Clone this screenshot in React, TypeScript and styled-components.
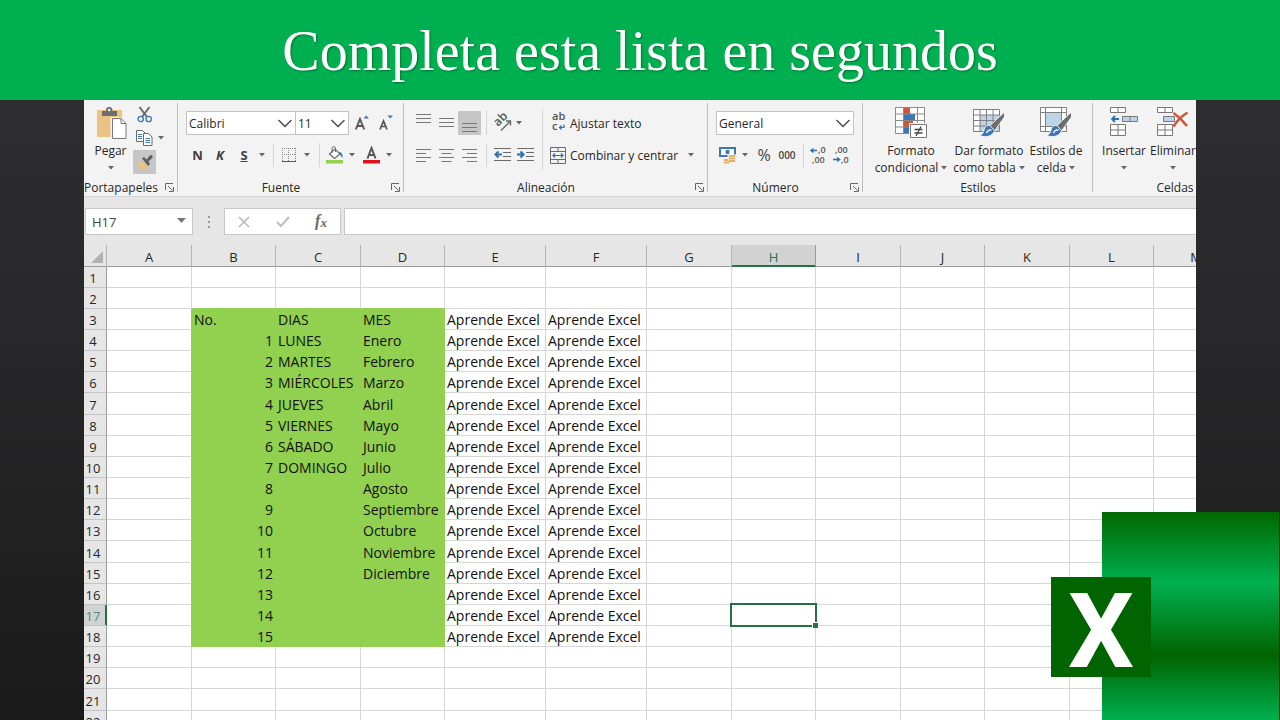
import React from "react";
import styled, { createGlobalStyle, css } from "styled-components";

const Global = createGlobalStyle`
  *, *::after { box-sizing: border-box; }
  body { margin: 0; background: #242426; }
  button, input, select { font: inherit; color: inherit; }
`;

const ui = `"Open Sans", "Noto Sans", sans-serif`;

const Page = styled.div`
  position: relative;
  display: flex;
  flex-direction: column;
  height: 100vh;
  overflow: hidden;
  background: linear-gradient(#303032, #29292b 40%, #212122 75%, #1b1a1b);
  font-family: ${ui};
  font-size: 12px;
  color: #262626;
`;

const Banner = styled.header`
  flex: none;
  display: flex;
  align-items: center;
  justify-content: center;
  height: 100px;
  padding-top: 2px;
  background: #00b050;
`;

const Title = styled.h1`
  margin: 0;
  font: 400 56px/64px "Liberation Serif", serif;
  color: #fff;
  text-shadow: 1px 1px 2px rgba(0, 60, 20, 0.5);
`;

const Workbook = styled.main`
  flex: 1;
  min-height: 0;
  margin: 0 84px;
  overflow: hidden;
  background: #fff;
`;

const Ribbon = styled.section`
  display: flex;
  height: 97px;
  overflow: hidden;
  background: #f3f3f3;
  border-bottom: 1px solid #d2d2d2;
`;

const Group = styled.section<{ $w: number }>`
  position: relative;
  flex: none;
  display: flex;
  flex-direction: column;
  width: ${(p) => p.$w}px;
  &::after {
    content: "";
    position: absolute;
    right: 0;
    top: 3px;
    bottom: 4px;
    width: 1px;
    background: #c0c0c0;
  }
`;

const GroupBody = styled.div<{ $pad?: number }>`
  flex: 1;
  display: flex;
  padding-left: ${(p) => p.$pad ?? 8}px;
`;

const GroupFooter = styled.div<{ $launcher: boolean; $start?: boolean }>`
  position: relative;
  display: flex;
  justify-content: ${(p) => (p.$start ? "flex-start" : "center")};
  height: 18px;
  padding-right: ${(p) => (p.$launcher ? 20 : 0)}px;
  line-height: 20px;
`;

const Launcher = styled.button`
  position: absolute;
  right: 4px;
  top: 5px;
  padding: 0;
  border: 0;
  background: none;
  svg { display: block; }
`;

const Rows = styled.div`
  display: flex;
  flex-direction: column;
  gap: 8px;
  padding-top: 11px;
`;

const Row = styled.div`
  display: flex;
  align-items: center;
  height: 24px;
`;

const Tool = styled.button<{ $w: number; $on?: boolean }>`
  flex: none;
  display: flex;
  align-items: center;
  justify-content: center;
  width: ${(p) => p.$w}px;
  height: 24px;
  padding: 0;
  border: 0;
  background: ${(p) => (p.$on ? "#c6c6c6" : "none")};
  white-space: nowrap;
`;

const Letter = styled.span<{ $kind: "bold" | "italic" | "underline" }>`
  font-size: 13px;
  font-weight: 700;
  color: #404040;
  ${(p) => p.$kind === "italic" && css`font-style: italic;`}
  ${(p) => p.$kind === "underline" && css`text-decoration: underline;`}
`;

const PercentSign = styled.span`
  font-size: 16px;
  color: #444;
`;

const Thousands = styled.span`
  font-size: 10px;
  font-weight: 600;
  color: #444;
`;

const TextTool = styled.button`
  display: flex;
  align-items: center;
  gap: 4px;
  height: 24px;
  padding: 0;
  border: 0;
  background: none;
  white-space: nowrap;
`;

const Divider = styled.span<{ $w: number }>`
  flex: none;
  width: ${(p) => p.$w}px;
  height: 24px;
  background: linear-gradient(#d4d4d4, #d4d4d4) center / 1px 100% no-repeat;
`;

const TallDivider = styled.span`
  width: 8px;
  margin: 9px 4px 8px 0;
  background: linear-gradient(#d4d4d4, #d4d4d4) center / 1px 100% no-repeat;
`;

const Combo = styled.label<{ $w: number; $joined?: boolean }>`
  position: relative;
  flex: none;
  width: ${(p) => p.$w}px;
  height: 24px;
  border: 1px solid #c3c3c3;
  margin-left: ${(p) => (p.$joined ? -1 : 0)}px;
  background: #fff;
  select {
    appearance: none;
    width: 100%;
    height: 22px;
    padding: 0 2px;
    border: 0;
    background: none;
  }
  svg {
    position: absolute;
    right: 2px;
    top: 7px;
    pointer-events: none;
  }
`;

const BigTool = styled.button<{ $w: number }>`
  flex: none;
  display: flex;
  flex-direction: column;
  align-items: center;
  width: ${(p) => p.$w}px;
  padding: 6px 0 0;
  border: 0;
  background: none;
  line-height: 17px;
  white-space: nowrap;
  & > svg { flex: none; margin-bottom: 2px; }
`;

const Line = styled.span`
  display: flex;
  align-items: center;
  gap: 3px;
  height: 17px;
`;

const ClipTools = styled.div`
  display: flex;
  flex-direction: column;
  padding-top: 2px;
`;

const FormulaBar = styled.section`
  display: flex;
  height: 48px;
  padding: 11px 0 10px 1px;
  background: #e6e6e6;
`;

const NameBox = styled.label`
  position: relative;
  width: 108px;
  border: 1px solid #c8c8c8;
  background: #fff;
  input {
    width: 84px;
    height: 25px;
    padding: 0 6px;
    border: 0;
    background: none;
    outline: 0;
    font-size: 13px;
    color: #444;
  }
  svg { position: absolute; right: 6px; top: 9px; }
`;

const Grip = styled.span`
  display: flex;
  align-items: center;
  justify-content: center;
  width: 31px;
`;

const EntryTools = styled.div`
  display: flex;
  align-items: center;
  width: 117px;
  margin-right: 3px;
  border: 1px solid #c8c8c8;
  background: #fff;
`;

const Fx = styled.span`
  font: italic 700 16px/20px "Liberation Serif", serif;
  color: #666;
  sub { font-size: 13px; vertical-align: -1px; }
`;

const FormulaInput = styled.input`
  flex: 1;
  min-width: 0;
  border: 1px solid #c8c8c8;
  border-right: 0;
  background: #fff;
`;

const Grid = styled.table`
  table-layout: fixed;
  width: 1155px;
  border-collapse: separate;
  border-spacing: 0;
  font-size: 13px;
  line-height: 18px;
  color: #111;
  th, td { padding: 0; white-space: nowrap; }
  tbody tr { height: 21px; }
  tbody tr:nth-child(7n) { height: 22px; }
`;

const ColHead = styled.th<{ $on?: boolean }>`
  height: 22px;
  font-weight: 400;
  && { padding-top: 2px; }
  color: ${(p) => (p.$on ? "#217346" : "#262626")};
  background: ${(p) => (p.$on ? "#d2d2d2" : "#e6e6e6")};
  border-right: 1px solid ${(p) => (p.$on ? "#9a9a9a" : "#b4b4b4")};
  border-bottom: 1px solid ${(p) => (p.$on ? "#217346" : "#9b9b9b")};
  box-shadow: ${(p) => (p.$on ? "inset 0 -1px #217346" : "none")};
  svg { display: block; margin: 1px 0 0 5px; }
`;

const RowHead = styled.th<{ $on?: boolean }>`
  font-weight: 400;
  text-align: center;
  && { padding: 2px 4px 0 0; }
  color: ${(p) => (p.$on ? "#4f8a78" : "#262626")};
  background: ${(p) => (p.$on ? "#d2d2d2" : "#e6e6e6")};
  border-right: 1px solid ${(p) => (p.$on ? "#217346" : "#9b9b9b")};
  border-bottom: 1px solid #c4c4c4;
  box-shadow: ${(p) => (p.$on ? "inset -1px 0 #217346" : "none")};
`;

const fillColor = "#92d050";
const lineColor = "#d6d6d6";

const Cell = styled.td<{ $fill: boolean; $fillRight: boolean; $fillBelow: boolean; $right: boolean; $active: boolean }>`
  position: relative;
  z-index: ${(p) => (p.$active ? 1 : 0)};
  font-size: 14px;
  text-align: ${(p) => (p.$right ? "right" : "left")};
  && { padding: 2px 2px 0; }
  background: ${(p) => (p.$fill ? fillColor : "#fff")};
  border-right: 1px solid ${(p) => (p.$fillRight ? fillColor : lineColor)};
  border-bottom: 1px solid ${(p) => (p.$fillBelow ? fillColor : lineColor)};
`;

const Selection = styled.span`
  position: absolute;
  inset: -2px;
  border: 2px solid #217346;
  &::after {
    content: "";
    position: absolute;
    right: -3px;
    bottom: -3px;
    width: 6px;
    height: 6px;
    border: solid #fff;
    border-width: 1px 0 0 1px;
    background: #217346;
  }
`;

const Logo = styled.aside`
  position: absolute;
  right: 1px;
  bottom: 0;
  display: flex;
  align-items: center;
  width: 177px;
  height: 208px;
  background: linear-gradient(#006800, #00b050 34%, #006400 69%, #00b050);
  z-index: 2;
`;

const LogoTile = styled.div`
  display: flex;
  align-items: center;
  justify-content: center;
  width: 100px;
  height: 100px;
  padding-top: 10px;
  margin: 22px 0 0 -51px;
  background: #006400;
  color: #fff;
  font: 700 104px/90px Roboto, "Open Sans", sans-serif;
`;

const Caret = () => (
  <svg width="6" height="4" viewBox="0 0 6 4"><path d="M0 0h6L3 3.500z" fill="#666" /></svg>
);

const Chevron = () => (
  <svg width="16" height="9" viewBox="0 0 16 9"><path d="M1.500 1l6.500 6.500L14.500 1" fill="none" stroke="#444" strokeWidth="1.300" /></svg>
);

const LaunchIcon = () => (
  <svg width="9" height="9" viewBox="0 0 9 9" fill="none" stroke="#666">
    <path d="M.5 7V.5H8M3 3l4.500 4.500M8.500 4v4.500H4" />
  </svg>
);

const PasteIcon = () => (
  <svg width="32" height="34" viewBox="0 0 32 34">
    <path d="M2 4h25v27H2z" fill="#eac282" />
    <path d="M7 5h4V4a3.200 3 0 0 1 6.400 0v1H22v5H7z" fill="#6d6d6d" />
    <circle cx="14.200" cy="4" r="1.300" fill="#f3f3f3" />
    <path d="M15.500 11h11v6h5v16h-16z" fill="#f3f3f3" />
    <path d="M17.500 12.500h8.500l5 5v15H17.500z" fill="#fff" stroke="#777" />
    <path d="M26 12.500v5h5" fill="none" stroke="#777" />
  </svg>
);

const CutIcon = () => (
  <svg width="16" height="17" viewBox="0 0 16 17" fill="none">
    <path d="M2.500 1l7.500 10M12.500 1L5 11" stroke="#6a6a6a" strokeWidth="2" />
    <circle cx="3.700" cy="13" r="2.700" stroke="#3f76b5" strokeWidth="1.300" />
    <circle cx="11.700" cy="13" r="2.700" stroke="#3f76b5" strokeWidth="1.300" />
  </svg>
);

const CopyIcon = () => (
  <svg width="17" height="16" viewBox="0 0 17 16" stroke="#6a6a6a" fill="#fff">
    <path d="M.5.5h6l3 3v8h-9z" />
    <path d="M7.500 3.500h5l3.500 3.500v8.500H7.500z" />
    <path d="M2 4.500h4M2 6.500h4M2 8.500h4M9.500 8.500h4.500M9.500 10.500h4.500M9.500 12.500h4.500" stroke="#3f76b5" />
  </svg>
);

const BrushIcon = () => (
  <svg width="17" height="17" viewBox="0 0 17 17">
    <path d="M1 9.500L7 7l4.500 5L8 16.500C4.500 15.500 2 13 1 9.500z" fill="#eac282" />
    <path d="M6 4.500L8 3l2.500 2.500 3.200-3.800a1.700 1.700 0 0 1 2.500 2.300L12.500 7.500l1.500 2.500-2 2z" fill="#5f5f5f" />
  </svg>
);

const GrowFont = ({ down }: { down?: boolean }) => (
  <svg width="16" height="18" viewBox="0 0 16 18">
    {down ? (
      <path d="M1 15.500L4.500 7l3.500 8.500M2.300 12.500h4.400" fill="none" stroke="#555" strokeWidth="1.700" />
    ) : (
      <path d="M.8 15.500L5 5l4.200 10.500M2.200 12h5.600" fill="none" stroke="#555" strokeWidth="1.900" />
    )}
    <path d={down ? "M8.500 1.500h5.500l-2.700 3z" : "M8.500 4.500h5.500l-2.700-3z"} fill="#3f76b5" />
  </svg>
);

const BordersIcon = () => (
  <svg width="14" height="14" viewBox="0 0 14 14" stroke="#888" fill="none">
    <path d="M0 .5h14M0 6.500h14M.5 0v13M6.500 0v13M13.500 0v13" strokeDasharray="1 1" />
    <path d="M0 13.500h14" stroke="#555" />
  </svg>
);

const FillIcon = () => (
  <svg width="18" height="18" viewBox="0 0 18 18">
    <path d="M3.500 8L9 3l5 5-5.500 4.500z" fill="#fff" stroke="#666" strokeWidth="1.200" />
    <path d="M6 7V2.500a1.500 1.500 0 0 1 3.500 0V6" fill="none" stroke="#666" />
    <path d="M13 6c3 0 4 3 3.500 6C15 11 15 9 13.500 8z" fill="#3f76b5" />
    <path d="M0 14h17v3.500H0z" fill="#92d050" />
  </svg>
);

const FontColorIcon = () => (
  <svg width="17" height="18" viewBox="0 0 17 18">
    <path d="M4.500 12.500L8.500 2l4 10.500M5.800 9h5.400" fill="none" stroke="#555" strokeWidth="2" />
    <path d="M0 14h17v3.500H0z" fill="#e0101a" />
  </svg>
);

const lineSets: Record<string, string> = {
  top: "M0 1.500h15M0 5.500h15M0 9.500h15",
  middle: "M0 5.500h15M0 9.500h15M0 13.500h15",
  bottom: "M0 10.500h15M0 14.500h15M0 18.500h15",
  left: "M0 4.500h15M0 8.500h10M0 12.500h15M0 16.500h10",
  center: "M0 4.500h15M2.500 8.500h10M0 12.500h15M2.500 16.500h10",
  right: "M0 4.500h15M5 8.500h10M0 12.500h15M5 16.500h10",
};

const Lines = ({ kind }: { kind: string }) => (
  <svg width="15" height="20" viewBox="0 0 15 20"><path d={lineSets[kind]} stroke="#777" /></svg>
);

const IndentIcon = ({ more }: { more?: boolean }) => (
  <svg width="18" height="16" viewBox="0 0 18 16">
    <path d="M0 1.500h17M9 5.500h8M9 9.500h8M0 13.500h17" stroke="#6a6a6a" />
    <path d={more ? "M0 7.500h6M3.500 4.500l3 3-3 3" : "M8 7.500H2M4.500 4.500l-3 3 3 3"} fill="none" stroke="#2f6fab" strokeWidth="2" />
  </svg>
);

const Glyphs = styled.svg`
  overflow: visible;
`;

const SmallText = styled.text`
  font-family: ${ui};
  font-weight: 600;
  fill: #555;
`;

const OrientationIcon = () => (
  <Glyphs width="18" height="18" viewBox="0 0 18 18">
    <SmallText fontSize="12" transform="translate(4 13) rotate(-45)">ab</SmallText>
    <path d="M7 16.500L16 7.500M12 7h4.500v4.500" fill="none" stroke="#666" strokeWidth="1.400" />
  </Glyphs>
);

const WrapIcon = () => (
  <Glyphs width="16" height="20" viewBox="0 0 16 20">
    <SmallText x="2" y="7" fontSize="11">ab</SmallText>
    <SmallText x="2" y="17" fontSize="11">c</SmallText>
    <path d="M14 11.500v3H10M11.500 12.500l-2 2 2 2" fill="none" stroke="#2f6fab" strokeWidth="1.200" />
  </Glyphs>
);

const MergeIcon = () => (
  <svg width="16" height="17" viewBox="0 0 16 17" fill="none" stroke="#6a6a6a">
    <path d="M.5.5h15v16H.5zM.5 4.500h15M.5 12.500h15M8 .5v4M8 12.500v4" />
    <path d="M3 8.500h10M5 6.500l-2 2 2 2M11 6.500l2 2-2 2" stroke="#2f6fab" strokeWidth="1.200" />
  </svg>
);

const MoneyIcon = () => (
  <svg width="18" height="18" viewBox="0 0 18 18">
    <path d="M1 2h15v8H1z" fill="#fff" stroke="#3f76b5" strokeWidth="2" />
    <circle cx="8.500" cy="6" r="2.200" fill="#3f76b5" />
    <path d="M8.500 8.500H18V18H3.500v-6h5z" fill="#f3f3f3" />
    <path d="M10.500 10h5M10.500 12.500h5M10.500 15h5M5.500 14h3M5.500 16.500h4" stroke="#e3b06a" strokeWidth="1.800" strokeLinecap="round" />
  </svg>
);

const DecimalIcon = ({ less }: { less?: boolean }) => (
  <Glyphs width="18" height="18" viewBox="0 0 18 18">
    <SmallText x={less ? 2 : 8} y="7" fontSize="9">{less ? ",00" : ",0"}</SmallText>
    <SmallText x={less ? 8 : 2} y="17" fontSize="9">{less ? ",0" : ",00"}</SmallText>
    <path d={less ? "M0 13.500h6M4 11.500l2.500 2-2.500 2" : "M7 4.500H1M3.500 2.500L1 4.500l2.500 2"} fill="none" stroke="#2f6fab" strokeWidth="1.500" />
  </Glyphs>
);

const ConditionalIcon = () => (
  <svg width="32" height="34" viewBox="0 0 32 34">
    <path d="M.5 1.500h29v26H.5z" fill="#fff" />
    <path d="M9 1.500h6v6.500H9zM9 15h9v6H9z" fill="#d0553a" />
    <path d="M9 8h11v6.500H9zM9 21h5v6H9z" fill="#3f76b5" />
    <path d="M.5 1.500h29v26H.5zM.5 8h29M.5 14.500h29M.5 21h29M8.500 1.500v26M22.500 1.500v26" fill="none" stroke="#8a8a8a" />
    <path d="M14 17h18v16H14z" fill="#f3f3f3" />
    <path d="M15.500 18.500h16v13h-16z" fill="#fff" stroke="#777" />
    <path d="M19.500 23.500h8M19.500 27h8M26 20.500l-5 9.500" stroke="#444" strokeWidth="1.300" />
  </svg>
);

const PaintBrush = () => (
  <>
    <path d="M31.500 6L16.500 20l5 5L31.500 11z" fill="#6d6d6d" stroke="#f3f3f3" />
    <path d="M17 19.500c-3.500-.5-5.500 1.500-6 4.500-.5 2.500-1.500 4-4 5.500 5 2.500 13 1 14.500-5z" fill="#3f76b5" stroke="#f3f3f3" />
    <path d="M13.500 27c1-2.500 2.500-3.500 5-3" fill="none" stroke="#fff" strokeWidth="1.300" />
  </>
);

const TableStyleIcon = () => (
  <svg width="32" height="34" viewBox="0 0 32 34">
    <path d="M.5 3.500h26v22H.5z" fill="#fff" />
    <path d="M7 9h19.500v16.500H7z" fill="#bcd3e8" />
    <path d="M.5 3.500h26v22H.5zM.5 9h26M.5 14.500h26M.5 20h26M7 3.500v22M13.500 3.500v22M20 3.500v22" fill="none" stroke="#808080" />
    <PaintBrush />
  </svg>
);

const CellStyleIcon = () => (
  <svg width="32" height="34" viewBox="0 0 32 34">
    <path d="M.5 1.500h26v24H.5z" fill="#fff" />
    <path d="M6 7h15v13H6z" fill="#bcd3e8" />
    <path d="M.5 1.500h26v24H.5zM.5 6.500h26M.5 20.500h26M5.500 1.500v24M21.500 1.500v24" fill="none" stroke="#808080" />
    <PaintBrush />
  </svg>
);

const InsertIcon = () => (
  <svg width="28" height="34" viewBox="0 0 28 34" fill="#fff" stroke="#777">
    <path d="M.5 1.500h15v5H.5zM8 1.500v5M.5 18.500h15v11H.5zM.5 24h15M8 18.500v11" />
    <path d="M12.500 10.500h15v5h-15z" fill="#bcd3e8" />
    <path d="M20 10.500v5" />
    <path d="M9 13H2M5 10l-3 3 3 3" fill="none" stroke="#2f6fab" strokeWidth="1.800" />
  </svg>
);

const DeleteIcon = () => (
  <svg width="32" height="34" viewBox="0 0 32 34" fill="#fff" stroke="#777">
    <path d="M.5 1.500h15v5H.5zM8 1.500v5M.5 18.500h15v11H.5zM.5 24h15M8 18.500v11" />
    <path d="M6.500 10.500h11v5h-11z" fill="#bcd3e8" />
    <path d="M16.500 7c5 3.500 9.500 8 13.500 13M30.500 6.500c-5 3-10.500 8-14 14" fill="none" stroke="#d0553a" strokeWidth="2.600" />
  </svg>
);

const Footer = ({ label, plain, start }: { label: string; plain?: boolean; start?: boolean }) => (
  <GroupFooter $launcher={!plain} $start={start}>
    {label}
    {!plain && <Launcher aria-label={`Opciones de ${label}`}><LaunchIcon /></Launcher>}
  </GroupFooter>
);

const Big = ({ w, icon, a, b }: { w: number; icon: React.ReactNode; a: string; b?: string }) => (
  <BigTool $w={w}>
    {icon}
    <Line>{a}</Line>
    <Line>{b}<Caret /></Line>
  </BigTool>
);

const columns = [
  { name: "A", w: 85 }, { name: "B", w: 84 }, { name: "C", w: 85 }, { name: "D", w: 84 },
  { name: "E", w: 101 }, { name: "F", w: 101 }, { name: "G", w: 85 }, { name: "H", w: 84 },
  { name: "I", w: 85 }, { name: "J", w: 84 }, { name: "K", w: 85 }, { name: "L", w: 84 }, { name: "M", w: 85 },
];
const days = ["LUNES", "MARTES", "MIÉRCOLES", "JUEVES", "VIERNES", "SÁBADO", "DOMINGO"];
const months = ["Enero", "Febrero", "Marzo", "Abril", "Mayo", "Junio", "Julio", "Agosto", "Septiembre", "Octubre", "Noviembre", "Diciembre"];

const valueAt = (col: string, row: number): string => {
  if (row < 3 || row > 18) return "";
  const n = row - 3;
  if (col === "B") return n ? String(n) : "No.";
  if (col === "C") return n ? days[n - 1] ?? "" : "DIAS";
  if (col === "D") return n ? months[n - 1] ?? "" : "MES";
  return col === "E" || col === "F" ? "Aprende Excel" : "";
};

const isFilled = (col: string, row: number) => "BCD".includes(col) && row >= 3 && row <= 18;

export default function App() {
  return (
    <Page>
      <Global />
      <Banner><Title>Completa esta lista en segundos</Title></Banner>
      <Workbook>
        <Ribbon>
          <Group $w={94}>
            <GroupBody $pad={4}>
              <Big w={45} icon={<PasteIcon />} a="Pegar" />
              <ClipTools>
                <Tool $w={23} aria-label="Cortar"><CutIcon /></Tool>
                <Row>
                  <Tool $w={23} aria-label="Copiar"><CopyIcon /></Tool>
                  <Tool $w={10} aria-label="Más opciones de copia"><Caret /></Tool>
                </Row>
                <Tool $w={23} $on aria-label="Copiar formato"><BrushIcon /></Tool>
              </ClipTools>
            </GroupBody>
            <Footer label="Portapapeles" start />
          </Group>

          <Group $w={226}>
            <GroupBody>
              <Rows>
                <Row>
                  <Combo $w={110}><select aria-label="Fuente"><option>Calibri</option></select><Chevron /></Combo>
                  <Combo $w={54} $joined><select aria-label="Tamaño"><option>11</option></select><Chevron /></Combo>
                  <Tool $w={28} aria-label="Aumentar tamaño"><GrowFont /></Tool>
                  <Tool $w={20} aria-label="Disminuir tamaño"><GrowFont down /></Tool>
                </Row>
                <Row>
                  <Tool $w={23}><Letter $kind="bold">N</Letter></Tool>
                  <Tool $w={22}><Letter $kind="italic">K</Letter></Tool>
                  <Tool $w={26}><Letter $kind="underline">S</Letter></Tool>
                  <Tool $w={10} aria-label="Subrayados"><Caret /></Tool>
                  <Divider $w={12} />
                  <Tool $w={20} aria-label="Bordes"><BordersIcon /></Tool>
                  <Tool $w={16} aria-label="Más bordes"><Caret /></Tool>
                  <Divider $w={8} />
                  <Tool $w={24} aria-label="Color de relleno"><FillIcon /></Tool>
                  <Tool $w={10} aria-label="Más rellenos"><Caret /></Tool>
                  <Tool $w={28} aria-label="Color de fuente"><FontColorIcon /></Tool>
                  <Tool $w={8} aria-label="Más colores"><Caret /></Tool>
                </Row>
              </Rows>
            </GroupBody>
            <Footer label="Fuente" />
          </Group>

          <Group $w={304}>
            <GroupBody>
              <Rows>
                <Row>
                  <Tool $w={23} aria-label="Alinear arriba"><Lines kind="top" /></Tool>
                  <Tool $w={23} aria-label="Alinear en medio"><Lines kind="middle" /></Tool>
                  <Tool $w={23} $on aria-label="Alinear abajo"><Lines kind="bottom" /></Tool>
                  <Divider $w={11} />
                  <Tool $w={22} aria-label="Orientación"><OrientationIcon /></Tool>
                  <Tool $w={10} aria-label="Más orientaciones"><Caret /></Tool>
                </Row>
                <Row>
                  <Tool $w={23} aria-label="Alinear a la izquierda"><Lines kind="left" /></Tool>
                  <Tool $w={23} aria-label="Centrar"><Lines kind="center" /></Tool>
                  <Tool $w={23} aria-label="Alinear a la derecha"><Lines kind="right" /></Tool>
                  <Divider $w={11} />
                  <Tool $w={22} aria-label="Disminuir sangría"><IndentIcon /></Tool>
                  <Tool $w={24} aria-label="Aumentar sangría"><IndentIcon more /></Tool>
                </Row>
              </Rows>
              <TallDivider />
              <Rows>
                <TextTool><WrapIcon />Ajustar texto</TextTool>
                <Row>
                  <TextTool><MergeIcon />Combinar y centrar</TextTool>
                  <Tool $w={26} aria-label="Más opciones de combinar"><Caret /></Tool>
                </Row>
              </Rows>
            </GroupBody>
            <Footer label="Alineación" />
          </Group>

          <Group $w={155}>
            <GroupBody>
              <Rows>
                <Row>
                  <Combo $w={138}><select aria-label="Formato de número"><option>General</option></select><Chevron /></Combo>
                </Row>
                <Row>
                  <Tool $w={23} aria-label="Contabilidad"><MoneyIcon /></Tool>
                  <Tool $w={12} aria-label="Más monedas"><Caret /></Tool>
                  <Tool $w={26}><PercentSign>%</PercentSign></Tool>
                  <Tool $w={20}><Thousands>000</Thousands></Tool>
                  <Divider $w={12} />
                  <Tool $w={20} aria-label="Aumentar decimales"><DecimalIcon /></Tool>
                  <Tool $w={26} aria-label="Disminuir decimales"><DecimalIcon less /></Tool>
                </Row>
              </Rows>
            </GroupBody>
            <Footer label="Número" />
          </Group>

          <Group $w={230}>
            <GroupBody>
              <Big w={80} icon={<ConditionalIcon />} a="Formato" b="condicional" />
              <Big w={76} icon={<TableStyleIcon />} a="Dar formato" b="como tabla" />
              <Big w={58} icon={<CellStyleIcon />} a="Estilos de" b="celda" />
            </GroupBody>
            <Footer label="Estilos" plain />
          </Group>

          <Group $w={164}>
            <GroupBody>
              <Big w={46} icon={<InsertIcon />} a="Insertar" />
              <Big w={52} icon={<DeleteIcon />} a="Eliminar" />
            </GroupBody>
            <Footer label="Celdas" plain />
          </Group>
        </Ribbon>

        <FormulaBar>
          <NameBox>
            <input aria-label="Cuadro de nombres" defaultValue="H17" />
            <svg width="9" height="6" viewBox="0 0 9 6"><path d="M0 0h9L4.500 5z" fill="#777" /></svg>
          </NameBox>
          <Grip>
            <svg width="2" height="12" viewBox="0 0 2 12" fill="#999"><path d="M0 0h2v2H0zM0 5h2v2H0zM0 10h2v2H0z" /></svg>
          </Grip>
          <EntryTools>
            <Tool $w={38} aria-label="Cancelar">
              <svg width="12" height="12" viewBox="0 0 12 12"><path d="M1 1l10 10M11 1L1 11" stroke="#b9b9b9" strokeWidth="1.600" /></svg>
            </Tool>
            <Tool $w={39} aria-label="Introducir">
              <svg width="14" height="12" viewBox="0 0 14 12"><path d="M1 6l4 4 8-9" fill="none" stroke="#c0c0c0" strokeWidth="2.200" /></svg>
            </Tool>
            <Tool $w={38} aria-label="Insertar función"><Fx>f<sub>x</sub></Fx></Tool>
          </EntryTools>
          <FormulaInput aria-label="Barra de fórmulas" />
        </FormulaBar>

        <Grid>
          <colgroup>
            <col style={{ width: 23 }} />
            {columns.map((c) => <col key={c.name} style={{ width: c.w }} />)}
          </colgroup>
          <thead>
            <tr>
              <ColHead aria-label="Seleccionar todo">
                <svg width="14" height="14" viewBox="0 0 14 14"><path d="M14 1v12H2z" fill="#b2b2b2" /></svg>
              </ColHead>
              {columns.map((c) => <ColHead key={c.name} $on={c.name === "H"}>{c.name}</ColHead>)}
            </tr>
          </thead>
          <tbody>
            {Array.from({ length: 22 }, (_, i) => i + 1).map((row) => (
              <tr key={row}>
                <RowHead $on={row === 17}>{row}</RowHead>
                {columns.map((c, i) => {
                  const active = c.name === "H" && row === 17;
                  const filled = isFilled(c.name, row);
                  return (
                    <Cell
                      key={c.name}
                      $fill={filled}
                      $fillRight={filled || isFilled(columns[i + 1]?.name ?? "-", row)}
                      $fillBelow={filled || isFilled(c.name, row + 1)}
                      $right={c.name === "B" && row > 3}
                      $active={active}
                    >
                      {valueAt(c.name, row)}
                      {active && <Selection />}
                    </Cell>
                  );
                })}
              </tr>
            ))}
          </tbody>
        </Grid>
      </Workbook>
      <Logo><LogoTile>X</LogoTile></Logo>
    </Page>
  );
}
